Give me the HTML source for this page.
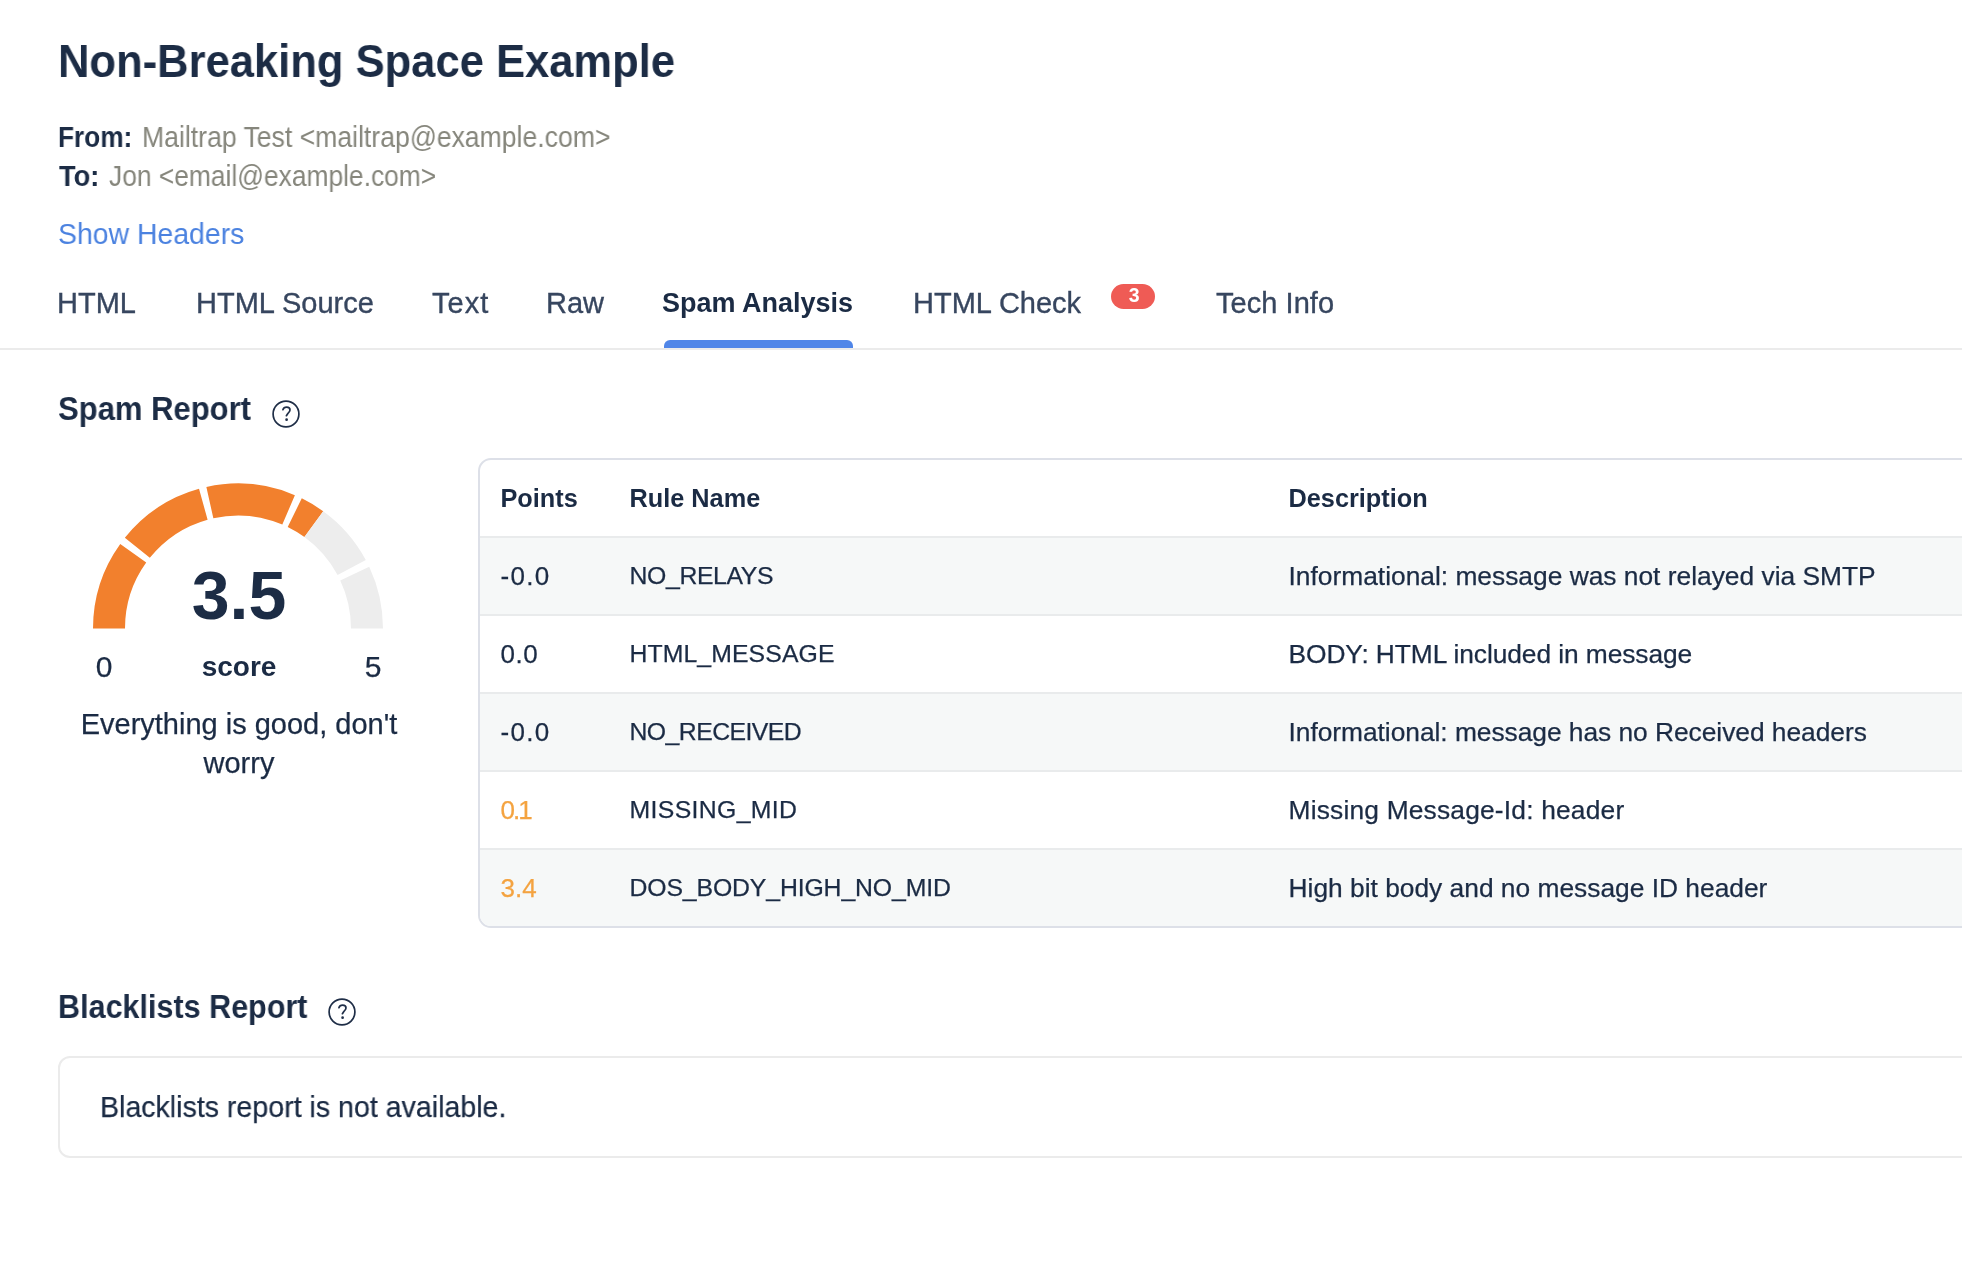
<!DOCTYPE html>
<html>
<head>
<meta charset="utf-8">
<style>
html,body{margin:0;padding:0;background:#ffffff;}
body{width:1962px;height:1274px;overflow:hidden;position:relative;font-family:"Liberation Sans",sans-serif;color:#1b2b44;}
.t,.tab,#tbl,#badge{will-change:transform;}
.t{position:absolute;white-space:nowrap;}
.b{font-weight:bold;}
#title{left:58px;top:40px;font-size:45.5px;line-height:44.5px;transform:scaleX(0.957);transform-origin:0 0;font-weight:bold;color:#1c2c45;}
.lbl{font-weight:bold;color:#1c2c45;}
.val{color:#86867c;}
#from{left:59px;top:124px;font-size:26.8px;line-height:26.8px;}
#to{left:59px;top:163px;font-size:26.8px;line-height:26.8px;}
#show{left:58px;top:219.5px;font-size:29.5px;line-height:28.8px;transform:scaleX(0.963);transform-origin:0 0;color:#4b82e0;}
#tabline{position:absolute;left:0;top:348px;width:1962px;height:2px;background:#ebebeb;}
.tab{position:absolute;top:289px;font-size:29px;line-height:29px;color:#37465f;white-space:nowrap;-webkit-text-stroke:0.35px #37465f;}
.tab.active{font-weight:bold;color:#1b2b44;font-size:27px;line-height:29px;-webkit-text-stroke:0;}
#ul{position:absolute;left:664px;top:340px;width:189px;height:8px;background:#5086e8;border-radius:6px 6px 0 0;}
#badge{position:absolute;left:1111px;top:284px;width:44px;height:25px;border-radius:13px;background:#ef5b55;color:#fff;font-weight:bold;font-size:19.5px;line-height:23px;text-align:center;text-indent:2.4px;}
h2{margin:0;}
.help{position:absolute;width:24px;height:24px;border:2px solid #1c2c45;border-radius:50%;font-size:18px;line-height:24px;text-align:center;color:#1c2c45;}
#tbl{position:absolute;left:478px;top:458px;width:1560px;height:466px;border:2px solid #dde0e8;border-radius:13px;overflow:hidden;background:#fff;}
.row{position:absolute;left:0;width:100%;height:76px;}
.sep{position:absolute;left:0;width:100%;height:2px;background:#e9ebec;}
.cell{position:absolute;white-space:nowrap;font-size:26px;line-height:26px;color:#1b2b44;-webkit-text-stroke:0.25px currentColor;}
.hd{-webkit-text-stroke:0;}
.rg{-webkit-text-stroke:0.25px currentColor;}
.hd{font-weight:bold;font-size:25.3px;-webkit-text-stroke:0;}
.rn{font-size:24.8px;}
.ds{font-size:26.35px;}
.gray{background:#f6f8f8;}
.orange{color:#f4a340;}
#bl{position:absolute;left:58px;top:1056px;width:1960px;height:98px;border:2px solid #ebebeb;border-radius:12px;}
</style>
</head>
<body>
<div id="title" class="t">Non-Breaking Space Example</div>
<div class="t lbl" style="left:58px;top:124px;font-size:28.8px;line-height:26.8px;transform:scaleX(0.91);transform-origin:0 0;">From:</div><div class="t val" style="left:142px;top:124px;font-size:28.8px;line-height:26.8px;transform:scaleX(0.9235);transform-origin:0 0;">Mailtrap Test &lt;mailtrap@example.com&gt;</div>
<div class="t lbl" style="left:59px;top:163px;font-size:28.8px;line-height:26.8px;transform:scaleX(0.945);transform-origin:0 0;">To:</div><div class="t val" style="left:109px;top:163px;font-size:28.8px;line-height:26.8px;transform:scaleX(0.9155);transform-origin:0 0;">Jon &lt;email@example.com&gt;</div>
<div id="show" class="t">Show Headers</div>

<div class="tab" style="left:57px">HTML</div>
<div class="tab" style="left:196px">HTML Source</div>
<div class="tab" style="left:432px;letter-spacing:1px">Text</div>
<div class="tab" style="left:546px">Raw</div>
<div class="tab active" style="left:662px">Spam Analysis</div>
<div class="tab" style="left:913px">HTML Check</div>
<div id="badge">3</div>
<div class="tab" style="left:1216px;letter-spacing:0.05px">Tech Info</div>
<div id="tabline"></div>
<div id="ul"></div>

<div class="t b" style="left:58px;top:393px;font-size:33px;line-height:31.5px;color:#1c2c45;transform:scaleX(0.94);transform-origin:0 0;">Spam Report</div>
<svg class="hicon" style="position:absolute;left:270.9px;top:398.8px" width="30" height="30" viewBox="0 0 30 30"><circle cx="15" cy="15" r="12.9" fill="none" stroke="#1f2e47" stroke-width="1.7"/><path d="M11.9 10.7C12.5 8.9 13.9 8.2 15.6 8.2C17.5 8.2 19 9.3 19 11C19 12.7 17.6 13.5 16.7 14.7L15.4 16.7" fill="none" stroke="#1f2e47" stroke-width="1.7" stroke-linecap="round" stroke-linejoin="round"/><circle cx="15.6" cy="20.7" r="1.35" fill="#1f2e47"/></svg>

<svg style="position:absolute;left:0;top:0" width="480" height="700" viewBox="0 0 480 700">
<path fill="#f2802d" d="M93.00 628.50A145 145 0 0 1 120.25 543.89L146.23 562.56A113 113 0 0 0 125.00 628.50ZM124.84 537.84A145 145 0 0 1 199.01 488.84L207.61 519.66A113 113 0 0 0 149.81 557.85ZM206.37 486.99A145 145 0 0 1 294.89 495.13L282.33 524.56A113 113 0 0 0 213.35 518.22ZM301.79 498.29A145 145 0 0 1 323.23 511.19L304.42 537.08A113 113 0 0 0 287.71 527.02Z"/>
<path fill="#ededed" d="M323.23 511.19A145 145 0 0 1 365.79 559.98L337.59 575.10A113 113 0 0 0 304.42 537.08ZM369.20 566.76A145 145 0 0 1 383.00 628.50L351.00 628.50A113 113 0 0 0 340.25 580.39Z"/>
</svg>
<div class="t b" style="left:139px;top:561px;width:200px;text-align:center;font-size:68px;line-height:68px;color:#1c2c45;">3.5</div>
<div class="t rg" style="left:64px;top:652.7px;width:80px;text-align:center;font-size:30px;line-height:28.5px;">0</div>
<div class="t b" style="left:139px;top:653px;width:200px;text-align:center;font-size:28px;line-height:28.5px;">score</div>
<div class="t rg" style="left:333px;top:652.7px;width:80px;text-align:center;font-size:30px;line-height:28.5px;">5</div>
<div class="t rg" style="left:39px;top:705px;width:400px;text-align:center;font-size:29px;line-height:39px;white-space:normal;">Everything is good, don't<br>worry</div>

<div id="tbl">
  <div class="row" style="top:0">
    <div class="cell hd" style="left:20.5px;top:25px">Points</div>
    <div class="cell hd" style="left:149.5px;top:25px">Rule Name</div>
    <div class="cell hd" style="left:808.5px;top:25px">Description</div>
  </div>
  <div class="sep" style="top:76px"></div>
  <div class="row gray" style="top:78px">
    <div class="cell" style="left:20.5px;top:24.5px;letter-spacing:1.3px">-0.0</div>
    <div class="cell rn" style="left:149.5px;top:24.5px;letter-spacing:-0.37px">NO_RELAYS</div>
    <div class="cell ds" style="left:808.5px;top:24.5px">Informational: message was not relayed via SMTP</div>
  </div>
  <div class="sep" style="top:154px"></div>
  <div class="row" style="top:156px">
    <div class="cell" style="left:20.5px;top:24.5px;letter-spacing:0.5px">0.0</div>
    <div class="cell rn" style="left:149.5px;top:24.5px;letter-spacing:0.09px">HTML_MESSAGE</div>
    <div class="cell ds" style="left:808.5px;top:24.5px;letter-spacing:-0.08px">BODY: HTML included in message</div>
  </div>
  <div class="sep" style="top:232px"></div>
  <div class="row gray" style="top:234px">
    <div class="cell" style="left:20.5px;top:24.5px;letter-spacing:1.3px">-0.0</div>
    <div class="cell rn" style="left:149.5px;top:24.5px;letter-spacing:-0.55px">NO_RECEIVED</div>
    <div class="cell ds" style="left:808.5px;top:24.5px;letter-spacing:-0.035px">Informational: message has no Received headers</div>
  </div>
  <div class="sep" style="top:310px"></div>
  <div class="row" style="top:312px">
    <div class="cell orange" style="left:20.5px;top:24.5px;letter-spacing:-2px">0.1</div>
    <div class="cell rn" style="left:149.5px;top:24.5px;letter-spacing:0.35px">MISSING_MID</div>
    <div class="cell ds" style="left:808.5px;top:24.5px;letter-spacing:0.19px">Missing Message-Id: header</div>
  </div>
  <div class="sep" style="top:388px"></div>
  <div class="row gray" style="top:390px">
    <div class="cell orange" style="left:20.5px;top:24.5px">3.4</div>
    <div class="cell rn" style="left:149.5px;top:24.5px;letter-spacing:-0.13px">DOS_BODY_HIGH_NO_MID</div>
    <div class="cell ds" style="left:808.5px;top:24.5px">High bit body and no message ID header</div>
  </div>
</div>

<div class="t b" style="left:58px;top:992px;font-size:33.2px;line-height:30.8px;color:#1c2c45;transform:scaleX(0.92);transform-origin:0 0;">Blacklists Report</div>
<svg class="hicon" style="position:absolute;left:327px;top:996.8px" width="30" height="30" viewBox="0 0 30 30"><circle cx="15" cy="15" r="12.9" fill="none" stroke="#1f2e47" stroke-width="1.7"/><path d="M11.9 10.7C12.5 8.9 13.9 8.2 15.6 8.2C17.5 8.2 19 9.3 19 11C19 12.7 17.6 13.5 16.7 14.7L15.4 16.7" fill="none" stroke="#1f2e47" stroke-width="1.7" stroke-linecap="round" stroke-linejoin="round"/><circle cx="15.6" cy="20.7" r="1.35" fill="#1f2e47"/></svg>
<div id="bl"></div>
<div class="t rg" style="left:100px;top:1092.8px;font-size:30px;line-height:28.7px;transform:scaleX(0.952);transform-origin:0 0;">Blacklists report is not available.</div>
</body>
</html>
